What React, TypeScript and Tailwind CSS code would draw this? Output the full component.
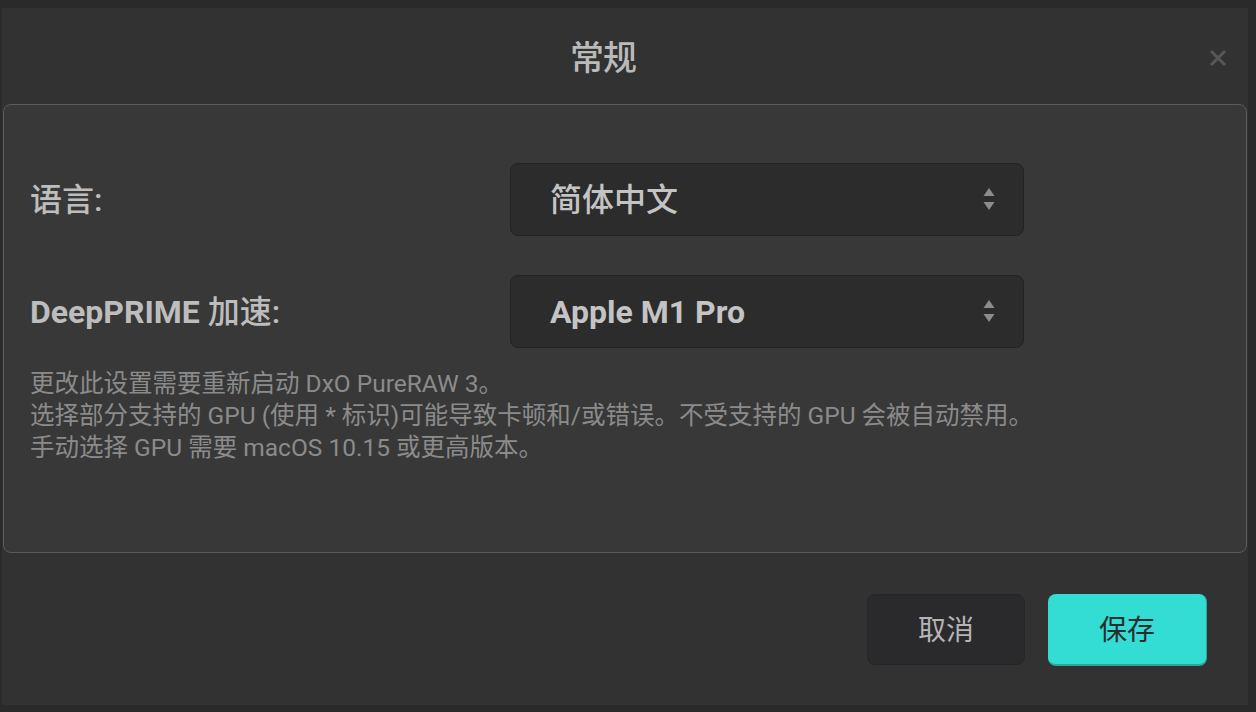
import React from "react";

const FONT = "font-['Roboto','Noto_Sans_CJK_SC',sans-serif]";

const UpDown: React.FC = () => (
  <svg width="12" height="23" viewBox="0 0 12 23" className="shrink-0">
    <path d="M6 0 L11.5 8 L0.5 8 Z" fill="#8c8c8c" />
    <path d="M6 22 L11.5 14 L0.5 14 Z" fill="#8c8c8c" />
  </svg>
);

const SelectBox: React.FC<{ children: React.ReactNode }> = ({ children }) => (
  <div className="w-[514px] h-[73px] rounded-[8px] bg-[#2c2c2c] border border-[#232323] flex items-center justify-between pl-[39px] pr-[28px]">
    <span className="text-[32px] text-[#c4c4c4] leading-none">{children}</span>
    <UpDown />
  </div>
);

const App: React.FC = () => {
  return (
    <div className={`w-[1256px] h-[712px] bg-[#2a2a2a] pt-[8px] pl-[2px] pr-[8px] pb-[7px] ${FONT}`}>
      <div className="w-full h-full bg-[#323232] flex flex-col">
        {/* header */}
        <div className="relative h-[96px] shrink-0 flex items-center justify-center pr-[44px] pt-[4px]">
          <h1 className="text-[34px] font-medium text-[#bababa] leading-none tracking-[-1px]">常规</h1>
          <svg width="18" height="18" viewBox="0 0 18 18" className="absolute right-[21px] top-[41px]">
            <path d="M2 2 L16 16 M16 2 L2 16" stroke="#575757" strokeWidth="3" />
          </svg>
        </div>

        {/* settings panel */}
        <div className="mx-[1px] h-[449px] shrink-0 rounded-[8px] border border-[#5b5b5b] bg-[#383838] pl-[26px] pt-[58px]">
          <div className="flex items-center">
            <div className="w-[480px] text-[32px] font-medium text-[#bdbdbd] leading-none">语言:</div>
            <SelectBox>
              <span className="font-medium">简体中文</span>
            </SelectBox>
          </div>
          <div className="flex items-center mt-[39px]">
            <div className="w-[480px] text-[32px] text-[#bdbdbd] leading-none">
              <span className="font-bold">DeepPRIME</span>{" "}
              <span className="font-medium">加速:</span>
            </div>
            <SelectBox>
              <span className="font-bold">Apple M1 Pro</span>
            </SelectBox>
          </div>
          <div className="mt-[20px] text-[24.5px] leading-[32px] text-[#8b8b8b]">
            <p>更改此设置需要重新启动 DxO PureRAW 3。</p>
            <p>选择部分支持的 GPU (使用 * 标识)可能导致卡顿和/或错误。不受支持的 GPU 会被自动禁用。</p>
            <p>手动选择 GPU 需要 macOS 10.15 或更高版本。</p>
          </div>
        </div>

        {/* footer */}
        <div className="flex-1 flex justify-end items-start pt-[41px] pr-[41px] gap-[23px]">
          <button className="w-[158px] h-[71px] rounded-[8px] bg-[#2a2a2c] border border-[#262626] text-[28px] text-[#b4b4b4] pt-[3px]">
            取消
          </button>
          <button className="w-[159px] h-[72px] rounded-[8px] bg-[#34ddd4] border-b-2 border-r border-[#2aa8a0] text-[28px] text-[#2c2c2c] pt-[3px]">
            保存
          </button>
        </div>
      </div>
    </div>
  );
};

export default App;
